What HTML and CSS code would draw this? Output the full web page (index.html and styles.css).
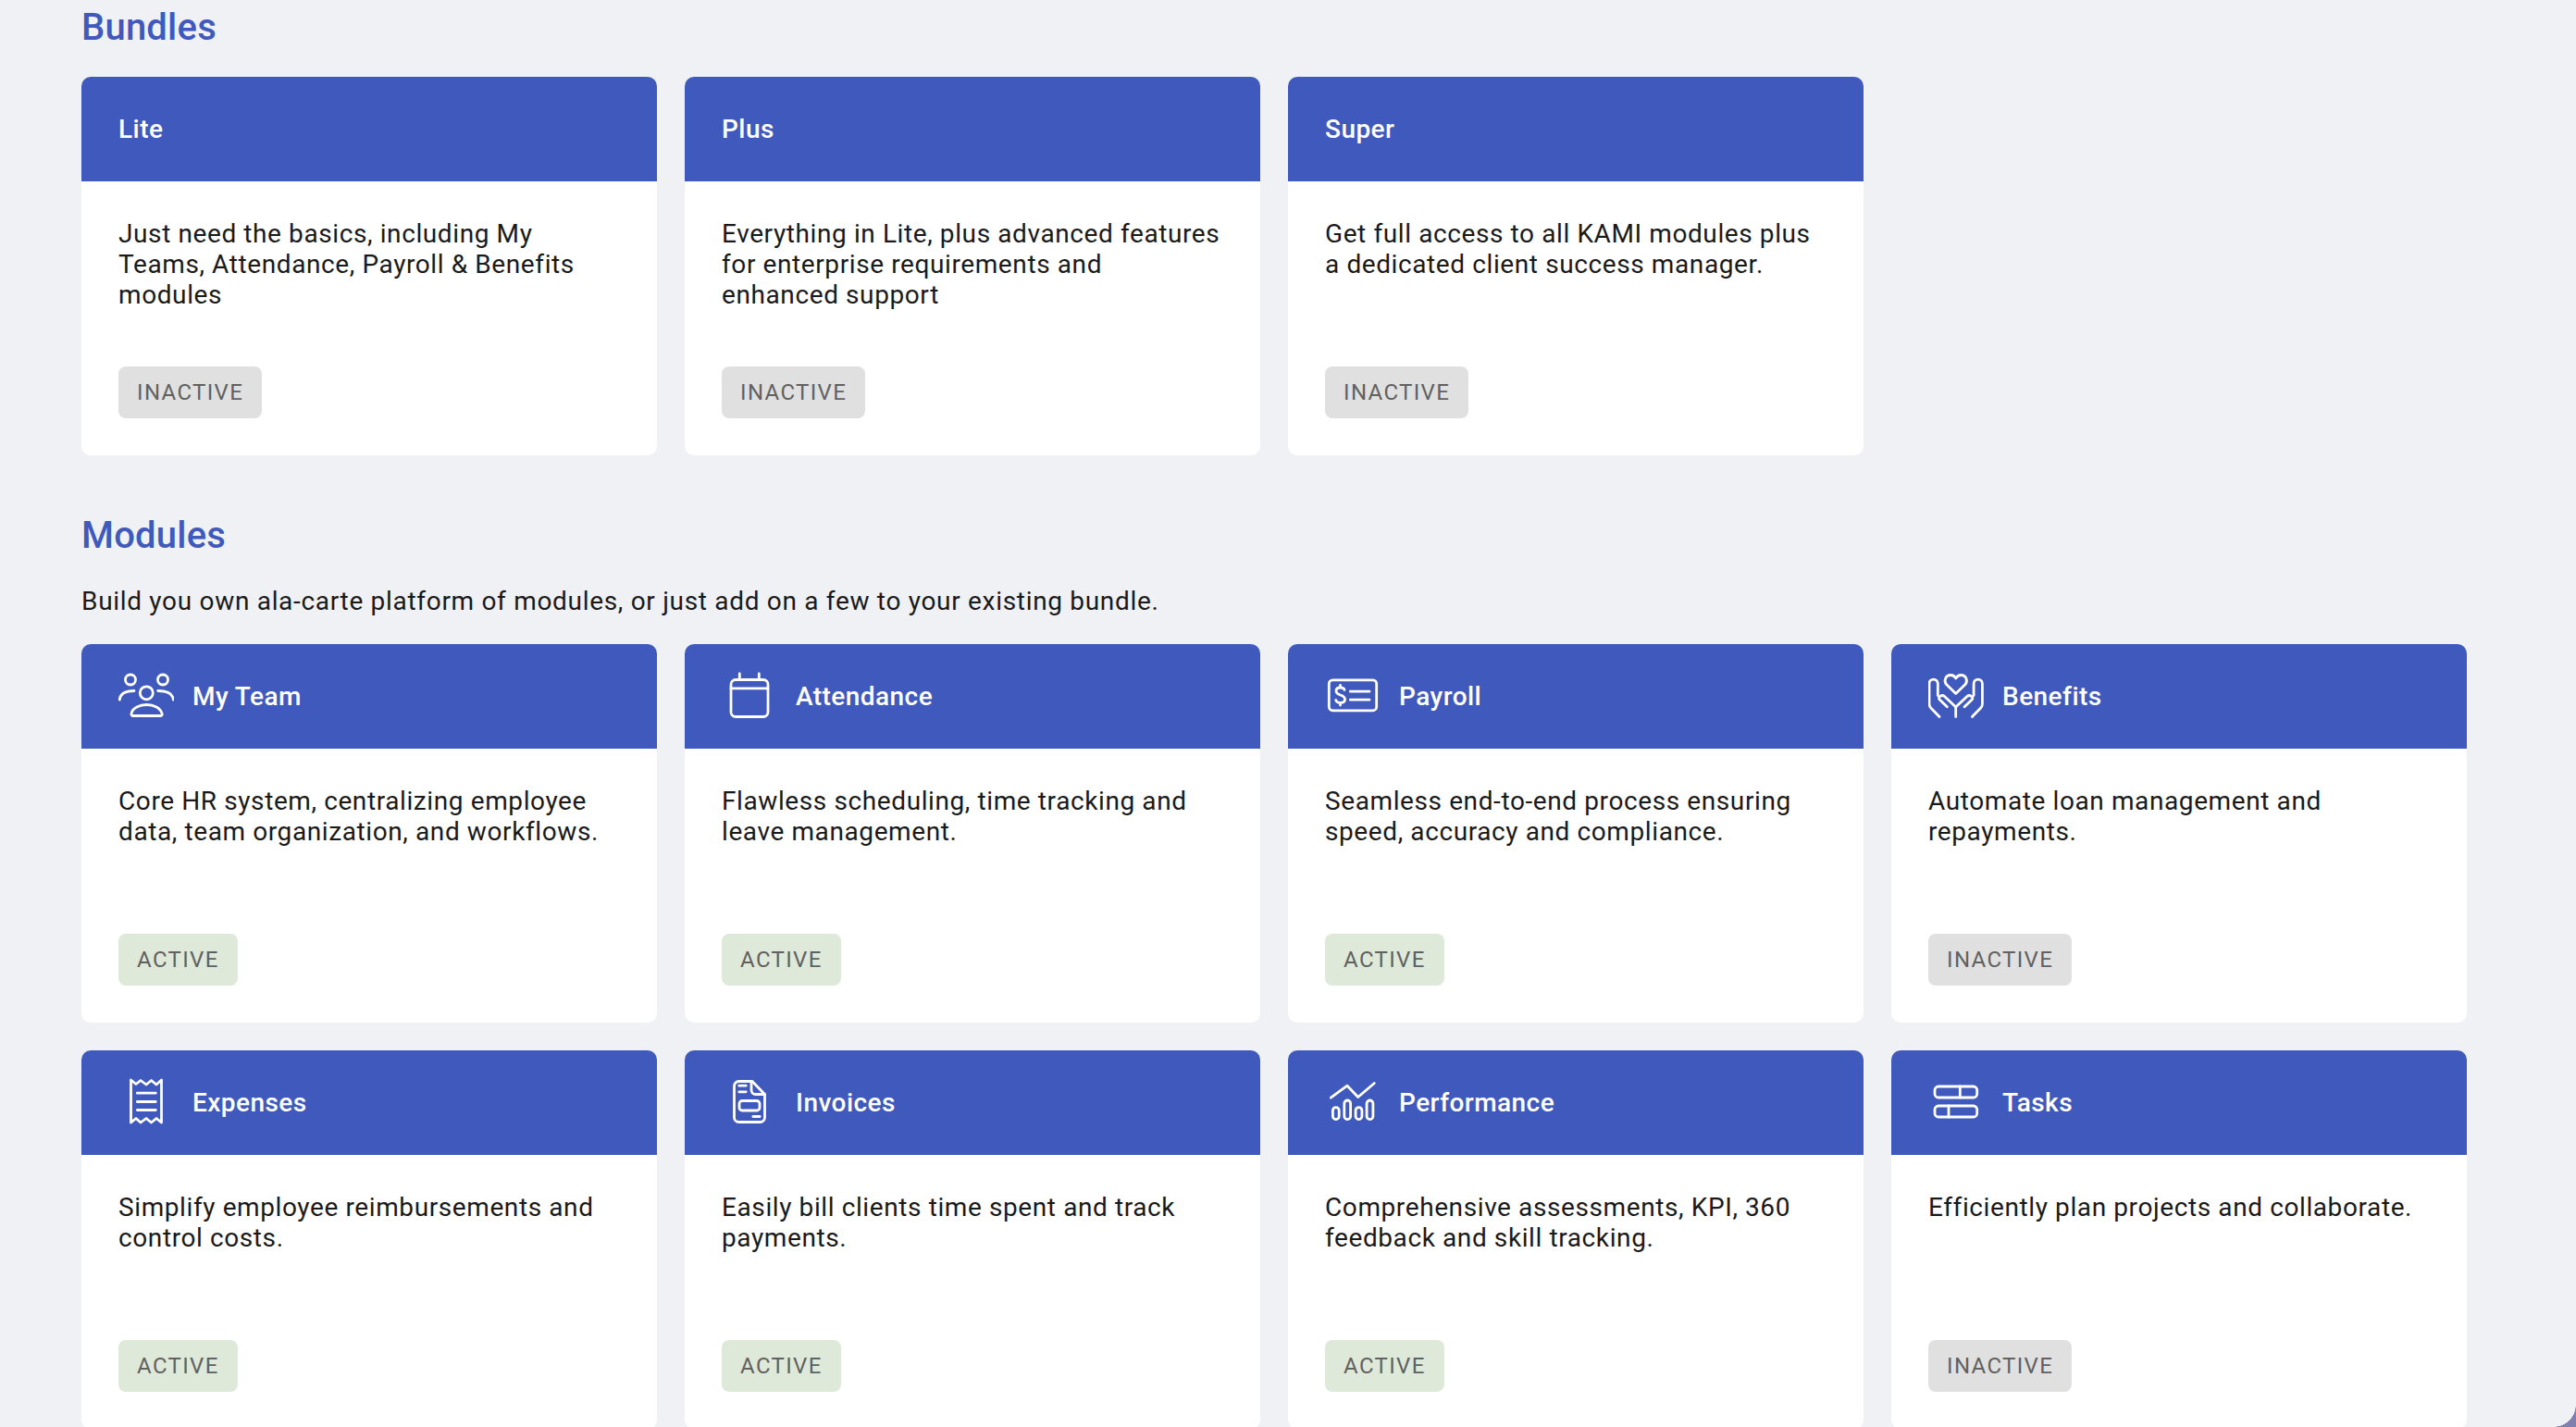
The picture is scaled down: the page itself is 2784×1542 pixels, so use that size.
FILE: index.html
```html
<!doctype html>
<html>
	<head>
		<title>Subscription</title>
		<link rel="stylesheet" href="styles.css">
	</head>

	<body>
		<div class="page">
			<h2 class="section-title bundles-title">Bundles</h2>
			<div class="card-grid">
				<div class="card">
					<div class="card-header">Lite</div>
					<div class="card-body">
						<p class="card-text">Just need the basics, including My Teams, Attendance, Payroll &amp; Benefits modules</p>
						<span class="badge inactive">INACTIVE</span>
					</div>
				</div>
				<div class="card">
					<div class="card-header">Plus</div>
					<div class="card-body">
						<p class="card-text">Everything in Lite, plus advanced features for enterprise requirements and enhanced support</p>
						<span class="badge inactive">INACTIVE</span>
					</div>
				</div>
				<div class="card">
					<div class="card-header">Super</div>
					<div class="card-body">
						<p class="card-text">Get full access to all KAMI modules plus a dedicated client success manager.</p>
						<span class="badge inactive">INACTIVE</span>
					</div>
				</div>
			</div>

			<h2 class="section-title modules-title">Modules</h2>
			<p class="section-text">Build you own ala-carte platform of modules, or just add on a few to your existing bundle.</p>
			<div class="card-grid">
				<div class="card">
					<div class="card-header">
						<svg class="card-icon" viewBox="0 0 60 60">
							<circle cx="13" cy="11.5" r="5.5"></circle>
							<circle cx="48" cy="11.5" r="5.5"></circle>
							<circle cx="30.3" cy="25.8" r="7"></circle>
							<path d="M16 50.5H45.5C47 50.5 47.5 49.5 47 48C45.5 42 38 38.5 30.5 38.5C23 38.5 15 42 14 48C13.7 49.5 14.5 50.5 16 50.5Z"></path>
							<path d="M1.3 33C2 26 8 23.5 17 23.5M59.3 33C58.6 26 52 23.5 42.7 23.5"></path>
						</svg>
						My Team
					</div>
					<div class="card-body">
						<p class="card-text">Core HR system, centralizing employee data, team organization, and workflows.</p>
						<span class="badge active">ACTIVE</span>
					</div>
				</div>
				<div class="card">
					<div class="card-header">
						<svg class="card-icon" viewBox="0 0 60 60">
							<rect x="10" y="11.5" width="40" height="40" rx="5"></rect>
							<path d="M10 20.8H50M19.3 4.8V11.5M40.3 4.8V11.5"></path>
						</svg>
						Attendance
					</div>
					<div class="card-body">
						<p class="card-text">Flawless scheduling, time tracking and leave management.</p>
						<span class="badge active">ACTIVE</span>
					</div>
				</div>
				<div class="card">
					<div class="card-header">
						<svg class="card-icon" viewBox="0 0 60 60">
							<rect x="4.3" y="11.8" width="51.4" height="33" rx="4"></rect>
							<path d="M21 22.5C20.5 20.5 19 20 16.5 20C13.5 20 12 21.5 12 23.8C12 26 13.5 27 16.5 28C19.5 29 21.5 30 21.5 32.5C21.5 35 19.5 36.5 16.5 36.5C14 36.5 12.2 35.5 11.7 33.5M16.5 17.5V20M16.5 36.5V39"></path>
							<path d="M27.3 24.2H48M27.3 33.2H48"></path>
						</svg>
						Payroll
					</div>
					<div class="card-body">
						<p class="card-text">Seamless end-to-end process ensuring speed, accuracy and compliance.</p>
						<span class="badge active">ACTIVE</span>
					</div>
				</div>
				<div class="card">
					<div class="card-header">
						<svg class="card-icon" viewBox="0 0 60 60">
							<path d="M29.7 26.5L19.5 16.5C16.5 13 18.5 6.5 24 6.5C27 6.5 29 8.5 29.7 10C30.5 8.5 32.5 6.5 35.5 6.5C41 6.5 43 13 40 16.5Z"></path>
							<path d="M12 51.5L3 42.3Q1 40.3 1 37.5V15.8C1 9.5 10.3 9.5 10.3 15.8V28.5M20.3 40.8L12 32.7C10 30.5 14.5 27 17.5 29.5L29.7 41V51.5"></path>
							<path d="M47.4 51.5L56.4 42.3Q58.4 40.3 58.4 37.5V15.8C58.4 9.5 49.1 9.5 49.1 15.8V28.5M39.1 40.8L47.4 32.7C49.4 30.5 44.9 27 41.9 29.5L29.7 41"></path>
						</svg>
						Benefits
					</div>
					<div class="card-body">
						<p class="card-text">Automate loan management and repayments.</p>
						<span class="badge inactive">INACTIVE</span>
					</div>
				</div>
				<div class="card">
					<div class="card-header">
						<svg class="card-icon" viewBox="0 0 60 60">
							<path d="M13.5 5L19 9.5L24 5.5L30 10L35.5 5.5L41 10L46.5 5V51L41 46.5L35.5 51L30 46.5L24 51L19 46.5L13.5 51Z"></path>
							<path d="M20.3 19.2H40.3M20.3 28.5H40.3M20.3 37.5H40.3"></path>
						</svg>
						Expenses
					</div>
					<div class="card-body">
						<p class="card-text">Simplify employee reimbursements and control costs.</p>
						<span class="badge active">ACTIVE</span>
					</div>
				</div>
				<div class="card">
					<div class="card-header">
						<svg class="card-icon" viewBox="0 0 60 60">
							<path d="M18.5 6.5H33L46.5 20.5V45.5A5 5 0 0 1 41.5 50.5H18.5A5 5 0 0 1 13.5 45.5V11.5A5 5 0 0 1 18.5 6.5Z"></path>
							<path d="M32 6.5V16A4.5 4.5 0 0 0 36.5 20.5H46.5"></path>
							<path d="M18.8 11.2H26.2M18.8 17.8H26.2M33.8 44.5H41.2"></path>
							<rect x="19" y="27.5" width="22" height="10.5" rx="3"></rect>
						</svg>
						Invoices
					</div>
					<div class="card-body">
						<p class="card-text">Easily bill clients time spent and track payments.</p>
						<span class="badge active">ACTIVE</span>
					</div>
				</div>
				<div class="card">
					<div class="card-header">
						<svg class="card-icon" viewBox="0 0 60 60">
							<path d="M6.3 24.2L24 11.2L35.7 23.5L53.3 8.5"></path>
							<rect x="8.4" y="34.6" width="6.8" height="13" rx="3.4"></rect>
							<rect x="20.8" y="27" width="6.8" height="20.6" rx="3.4"></rect>
							<rect x="33.1" y="34.6" width="6.8" height="13" rx="3.4"></rect>
							<rect x="45.1" y="27" width="6.8" height="20.6" rx="3.4"></rect>
						</svg>
						Performance
					</div>
					<div class="card-body">
						<p class="card-text">Comprehensive assessments, KPI, 360 feedback and skill tracking.</p>
						<span class="badge active">ACTIVE</span>
					</div>
				</div>
				<div class="card">
					<div class="card-header">
						<svg class="card-icon" viewBox="0 0 60 60">
							<rect x="7" y="12" width="45.7" height="12" rx="4"></rect>
							<rect x="7" y="33" width="45.7" height="12" rx="4"></rect>
							<path d="M34.3 12V24M22 33V45"></path>
						</svg>
						Tasks
					</div>
					<div class="card-body">
						<p class="card-text">Efficiently plan projects and collaborate.</p>
						<span class="badge inactive">INACTIVE</span>
					</div>
				</div>
			</div>
		</div>
		<div class="window-corner"></div>
	</body>
</html>
```

FILE: styles.css
```css
html,
body {
	height: 100%;
}

body {
	margin: 0px;
	overflow: hidden;
	position: relative;
	font-family: Roboto, "Liberation Sans", sans-serif;
	background-color: #f0f1f5;
	color: #1a1a1a;
}

.page {
	padding: 0px 118px 0px 88px;
}

.section-title {
	margin: 0px;
	color: #3f59bc;
	font-size: 40px;
	line-height: 56px;
	font-weight: 500;
	letter-spacing: 0.2px;
}

.bundles-title {
	padding-top: 2px;
	margin-bottom: 25px;
}

.modules-title {
	margin-top: 59px;
	margin-bottom: 26px;
}

.section-text {
	margin: 0px 0px 30px 0px;
	font-size: 28px;
	line-height: 33px;
	letter-spacing: 0.69px;
}

.card-grid {
	display: grid;
	grid-template-columns: repeat(4, 622px);
	gap: 30px;
}

.card {
	height: 409px;
	display: flex;
	flex-direction: column;
	background-color: #ffffff;
	border-radius: 10px;
	overflow: hidden;
}

.card-header {
	height: 113px;
	flex: none;
	display: flex;
	align-items: center;
	gap: 20px;
	padding: 0px 40px;
	background-color: #3f59bc;
	color: #ffffff;
	font-size: 28px;
	font-weight: 500;
	letter-spacing: 0.45px;
}

.card-icon {
	width: 60px;
	height: 60px;
	flex: none;
	fill: none;
	stroke: #ffffff;
	stroke-width: 2.8;
	stroke-linecap: round;
	stroke-linejoin: round;
}

.card-body {
	flex: 1;
	display: flex;
	flex-direction: column;
	align-items: flex-start;
	justify-content: space-between;
	padding: 40px;
}

.card-text {
	margin: 0px;
	font-size: 28px;
	line-height: 33px;
	letter-spacing: 0.6px;
}

.badge {
	height: 56px;
	box-sizing: border-box;
	display: flex;
	align-items: center;
	padding: 0px 20px;
	border-radius: 8px;
	font-size: 24px;
	letter-spacing: 1.35px;
	color: #616161;
}

.badge.active {
	background-color: #dfe9da;
}

.badge.inactive {
	background-color: #e0e0e0;
}

.window-corner {
	position: absolute;
	right: 0px;
	bottom: 0px;
	width: 24px;
	height: 24px;
	background: radial-gradient(circle at top left, transparent 23.5px, #8080b0 24px);
}
```
